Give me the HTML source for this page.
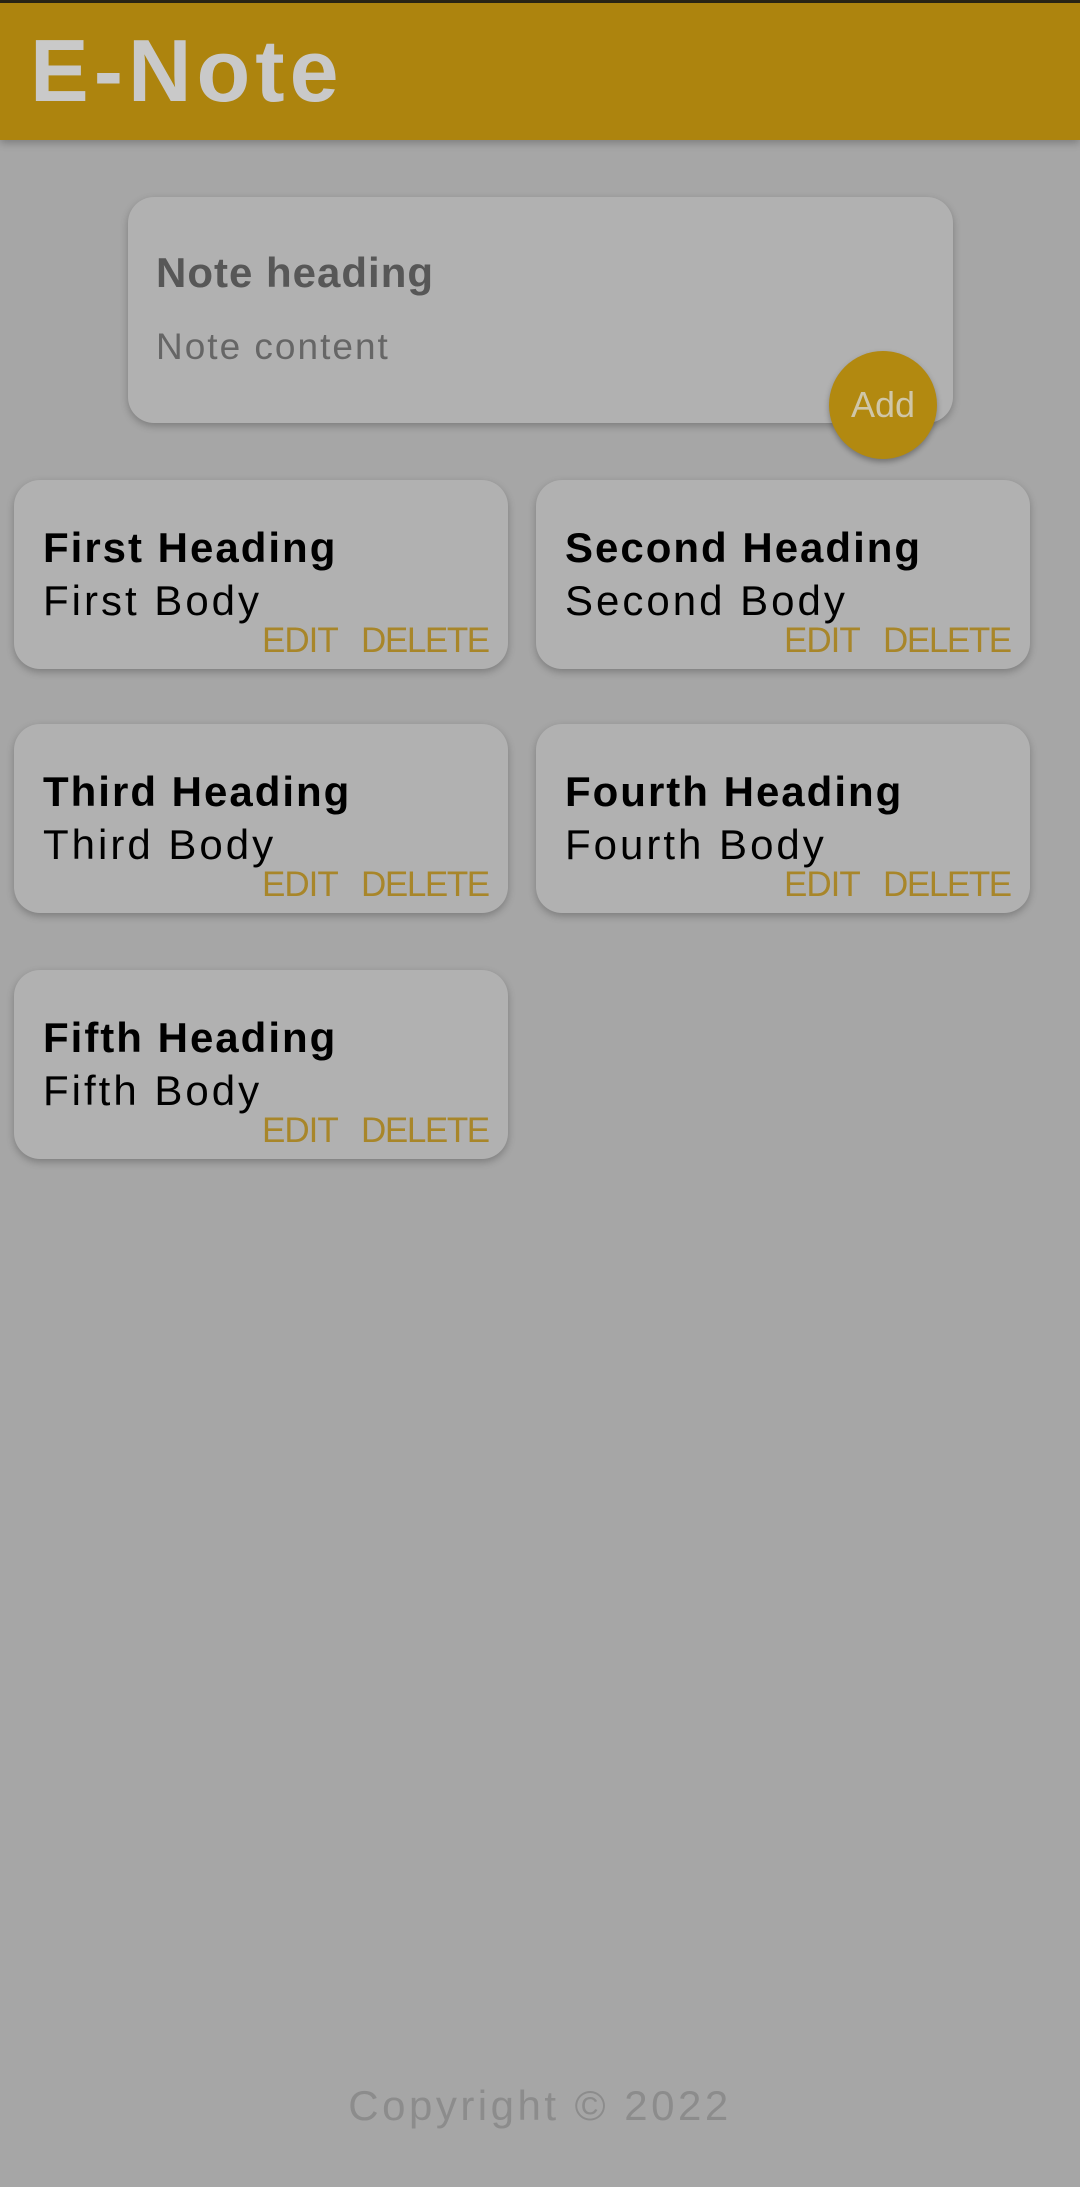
<!DOCTYPE html>
<html><head><meta charset="utf-8"><style>
*{margin:0;padding:0;box-sizing:border-box}
body{width:1080px;height:2187px;background:#a6a6a6;position:relative;overflow:hidden;font-family:"Liberation Sans",sans-serif}
.top{position:absolute;left:0;top:0;width:1080px;height:3px;background:#2a2616}
.hdr{position:absolute;left:0;top:3px;width:1080px;height:137px;background:#ad840e;box-shadow:0 3px 8px rgba(0,0,0,.25)}
.logo{position:absolute;left:30px;top:24px;font-size:88px;font-weight:bold;color:#c9c9c9;letter-spacing:5px;line-height:1}
.inp{position:absolute;left:128px;top:197px;width:825px;height:226px;background:#b1b1b1;border-radius:26px;box-shadow:0 3px 8px rgba(0,0,0,.25)}
.t{position:absolute;white-space:nowrap;line-height:1}
.add{position:absolute;left:829px;top:351px;width:108px;height:108px;border-radius:50%;background:#b28910;color:#cfc6a8;font-size:36px;display:flex;align-items:center;justify-content:center;box-shadow:0 3px 6px rgba(0,0,0,.3)}
.card{position:absolute;width:494px;height:189px;background:#b1b1b1;border-radius:26px;box-shadow:0 3px 8px rgba(0,0,0,.25)}
.card h2{position:absolute;left:29px;top:44px;font-size:42px;font-weight:bold;color:#000;white-space:nowrap;letter-spacing:2px}
.card p{position:absolute;left:29px;top:97px;font-size:42px;color:#000;white-space:nowrap;letter-spacing:3px}
.card .e{position:absolute;left:248px;top:143px;font-size:35px;color:#a8862a;letter-spacing:-1px}
.card .d{position:absolute;left:347px;top:143px;font-size:35px;color:#a8862a;letter-spacing:-1.4px}
</style></head><body>
<div class="top"></div>
<div class="hdr"><div class="logo">E-Note</div></div>
<div class="inp">
<div class="t" style="left:28px;top:55px;font-size:42px;font-weight:bold;color:#575757;letter-spacing:1px">Note heading</div>
<div class="t" style="left:28px;top:131px;font-size:37px;color:#666;letter-spacing:2px">Note content</div>
</div>
<div class="add">Add</div>

<div class="card" style="left:14px;top:480px"><h2>First Heading</h2><p>First Body</p><span class="t e">EDIT</span><span class="t d">DELETE</span></div>
<div class="card" style="left:536px;top:480px"><h2>Second Heading</h2><p>Second Body</p><span class="t e">EDIT</span><span class="t d">DELETE</span></div>
<div class="card" style="left:14px;top:724px"><h2>Third Heading</h2><p>Third Body</p><span class="t e">EDIT</span><span class="t d">DELETE</span></div>
<div class="card" style="left:536px;top:724px"><h2>Fourth Heading</h2><p>Fourth Body</p><span class="t e">EDIT</span><span class="t d">DELETE</span></div>
<div class="card" style="left:14px;top:970px"><h2>Fifth Heading</h2><p>Fifth Body</p><span class="t e">EDIT</span><span class="t d">DELETE</span></div>

<div class="t" style="left:0;width:1080px;text-align:center;top:2085px;font-size:42px;color:#8c8c8c;letter-spacing:3.5px">Copyright © 2022</div>
</body></html>
